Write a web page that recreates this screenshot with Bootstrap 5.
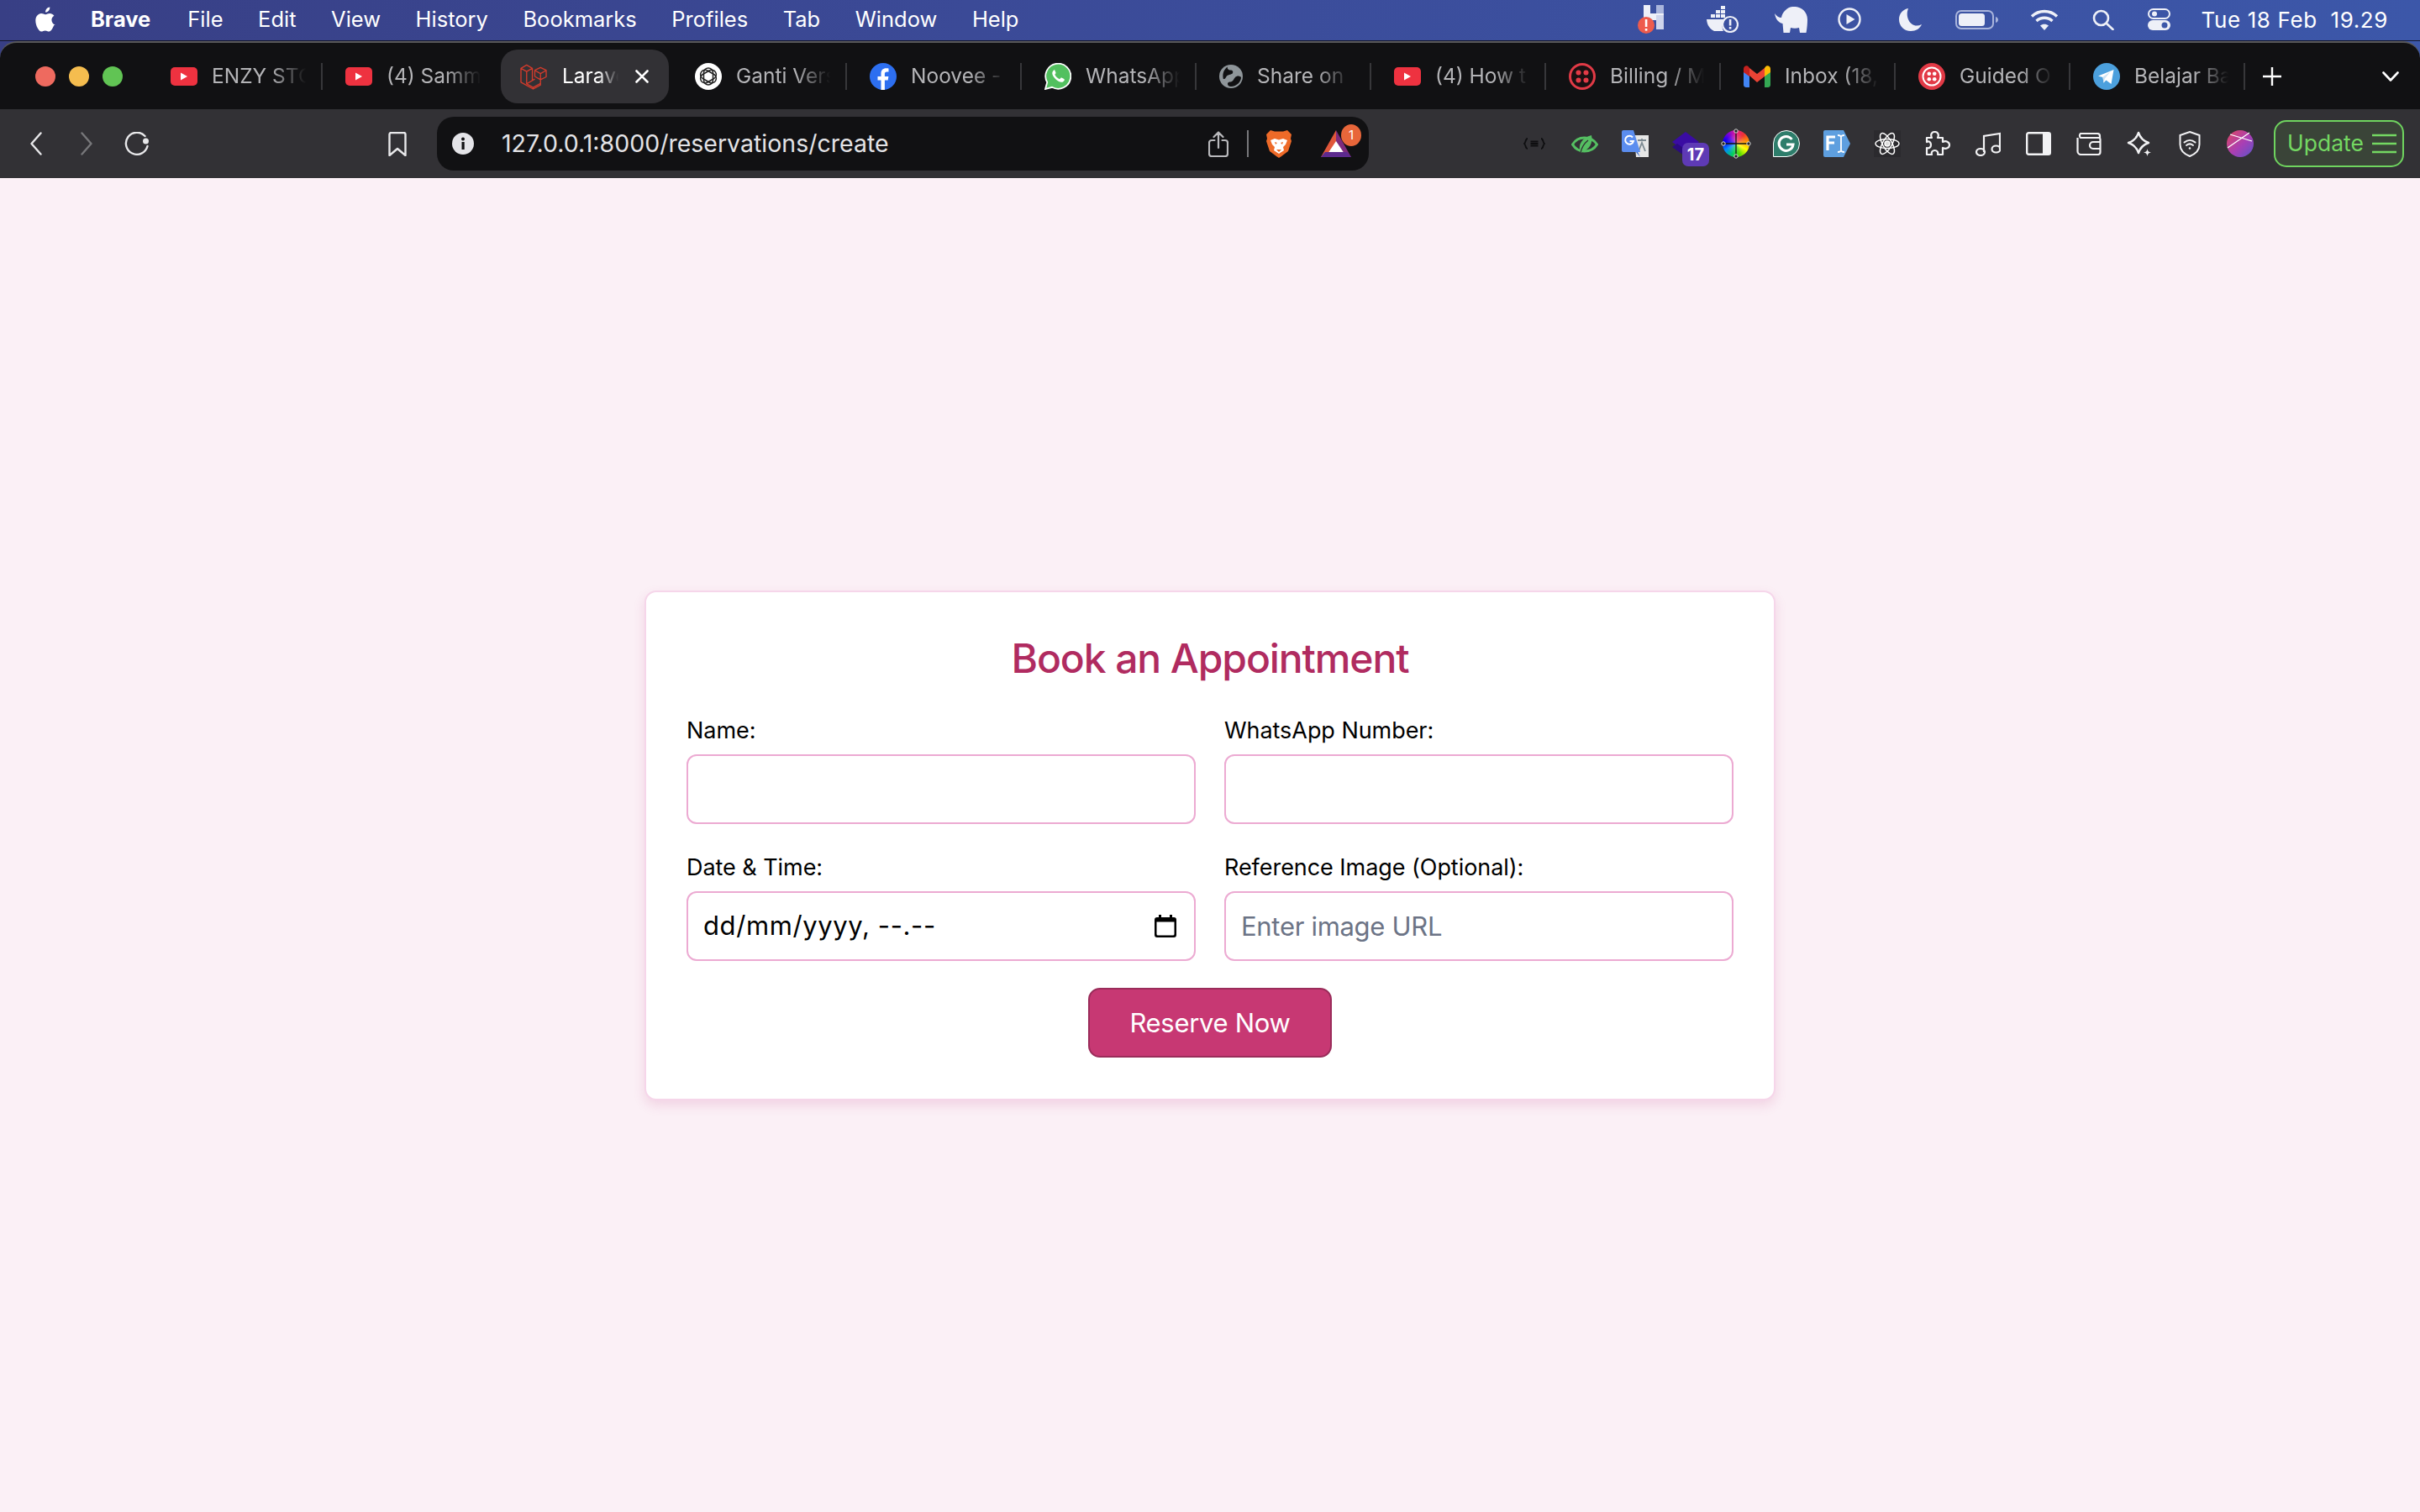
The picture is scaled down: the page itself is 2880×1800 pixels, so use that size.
<!DOCTYPE html>
<html lang="en">
<head>
  <meta charset="UTF-8" />
  <meta name="viewport" content="width=device-width, initial-scale=1.0"/>
  <title>Book an Appointment</title>
  <link href="https://cdn.jsdelivr.net/npm/bootstrap@5.3.0/dist/css/bootstrap.min.css" rel="stylesheet">
  <style>
    html, body { height: 100%; }
    body { background: #fbf0f6; font-family: Inter, "Liberation Sans", sans-serif; overflow: hidden; }
    svg { display: block; flex: none; }

    /* mac menu bar */
    .mac-top { background: linear-gradient(90deg, #383f85 0%, #3b4a97 40%, #3c57a9 100%); flex: none; }
    .menu-strip { height: 49px; padding-left: 42px; padding-bottom: 2px; color: #fff; font-size: 25.5px; border-bottom: 1px solid #15172a; }
    .menu-strip .apple-ico { margin-right: 41px; margin-top: -1px; }
    .menu-item { margin-right: 41.5px; white-space: nowrap; }
    .menu-item-bold { font-weight: 700; margin-right: 44px; }
    .menu-icons { margin-left: auto; padding-right: 38px; }
    .mi-docker { margin-left: 50px; }
    .mi-eleph { margin-left: 43px; }
    .mi-play { margin-left: 36px; }
    .mi-moon { margin-left: 45px; }
    .mi-batt { margin-left: 40px; }
    .mi-wifi { margin-left: 38px; }
    .mi-search { margin-left: 40px; }
    .mi-ctrl { margin-left: 40px; }
    .menu-date { margin-left: 37px; white-space: pre; font-size: 26px; letter-spacing: .6px; }

    /* browser chrome */
    .tab-strip { height: 81px; background: #111113; border-top: 2px solid #59595b; border-radius: 20px 20px 0 0; padding-left: 42px; }
    .light-dot { width: 24px; height: 24px; border-radius: 50%; margin-right: 16px; }
    .dot-red { background: #ee6a5f; }
    .dot-yellow { background: #f5bd4f; }
    .dot-green { background: #61c454; }
    .tab-row { margin-left: 14px; }
    .tab-cell { width: 208px; height: 32px; padding-left: 27px; gap: 17px; border-right: 2px solid #37373a; color: #b4b4b7; font-size: 24.5px; }
    .tab-cell.no-sep { border-right: 0; }
    .tab-now { width: 200px; height: 64px; margin: 0 4px; padding-left: 23px; gap: 18px; background: #323135; border-radius: 20px; border-right: 0; color: #fff; }
    .tab-name { width: 122px; overflow: hidden; white-space: nowrap; -webkit-mask-image: linear-gradient(90deg, #000 58%, transparent 92%); mask-image: linear-gradient(90deg, #000 58%, transparent 92%); }
    .tab-now .tab-name { width: 86px; -webkit-mask-image: linear-gradient(90deg, #000 50%, transparent 78%); mask-image: linear-gradient(90deg, #000 50%, transparent 78%); }
    .tab-x { margin-left: -17px; }
    .tab-plus { margin-left: 20px; }
    .tab-more { margin-left: auto; margin-right: 25px; }

    .tool-strip { height: 82px; background: #323135; padding-left: 13px; padding-right: 19px; }
    .tool-slot { width: 60px; }
    .tool-mark { margin-left: 269px; margin-right: 36px; }
    .addr-box { width: 1109px; height: 64px; background: #111113; border-radius: 20px; padding: 0 21px 0 18px; color: #e3e3e6; font-size: 28.5px; }
    .addr-url { margin-left: 33px; white-space: nowrap; }
    .addr-share { margin-left: auto; }
    .addr-line { width: 2px; height: 32px; background: #77777a; margin-left: 22px; margin-right: 20px; }
    .addr-bat { margin-left: 34px; }
    .bat-count { position: absolute; top: -7px; right: -12px; width: 24px; height: 26px; border-radius: 50%; background: #e8663a; color: #fff; font-size: 15px; line-height: 26px; text-align: center; }
    .ext-slot { width: 60px; height: 60px; }
    .ext-wrap { margin-left: auto; }
    .ext-count { position: absolute; left: 26px; bottom: 3px; width: 32px; height: 28px; border-radius: 7px; background: #5e3ab5; color: #fff; font-size: 20px; font-weight: 700; line-height: 28px; text-align: center; }
    .ext-wheel { width: 32px; height: 32px; border-radius: 50%; background: radial-gradient(circle, rgba(255,255,255,.35) 0, rgba(255,255,255,0) 55%), conic-gradient(#e8208c, #e33, #f90, #ff0, #5d0, #0c6, #08f, #00e, #70d, #e8208c); }
    .wheel-cross { position: absolute; left: 12px; top: 12px; }
    .update-pill { width: 155px; height: 56px; margin-left: 10px; padding-left: 14px; gap: 10px; background: #3a4438; border: 2px solid #6fd45f; border-radius: 15px; color: #74d862; font-size: 26.5px; }

    /* page */
    .form-shell { width: 1346px; border: 2px solid #f6d6ea; border-radius: 14px; box-shadow: 0 6px 14px rgba(190, 60, 130, .16); }
    .form-shell .card-body { padding: 49px 48px; }
    .form-title { font-size: 48px; line-height: 64px; font-weight: 500; color: #b02b60; letter-spacing: -1.1px; margin-top: -2px; margin-bottom: 34px; }
    .form-grid { --bs-gutter-x: 34px; --bs-gutter-y: 32px; }
    .form-grid .form-label { font-size: 27px; line-height: 40px; color: #000; margin-bottom: 8px; letter-spacing: -.05px; display: block; }
    .form-grid .form-control { height: 83px; padding: 0 18px; font-size: 31px; color: #000; border: 2px solid #ecaad2; border-radius: 12px; letter-spacing: -.3px; }
    .form-grid .form-control::placeholder { color: #6c7486; opacity: 1; }
    .date-mask { letter-spacing: .6px; }
    .date-ico { margin-right: 3px; }
    .reserve-btn { width: 290px; height: 83px; margin-top: 32px; background: #c73873; border: 2px solid #9a2c5a; border-radius: 14px; color: #fff; font-size: 31px; letter-spacing: -.3px; padding: 2px 0 0; }
    .reserve-btn:hover { background: #b8306a; color: #fff; border-color: #9a2c5a; }
  </style>
</head>

<body class="d-flex flex-column">
  <svg width="0" height="0" class="position-absolute">
    <symbol id="yt" viewBox="0 0 32 22"><rect width="32" height="22" rx="5" fill="#ee3240"/><path d="M12 6.500v9l8-4.500z" fill="#fff"/></symbol>
  </svg>

  <header class="mac-top">
    <div class="menu-strip d-flex align-items-center">
      <svg class="apple-ico" width="25" height="30" viewBox="0 0 16 20" fill="#fff"><path d="M11.200.3c.1 1-.3 2-.9 2.800-.6.700-1.600 1.300-2.600 1.200-.1-1 .4-2 .9-2.700C9.200.8 10.300.3 11.200.3zm3.300 14.400c-.4 1-.6 1.400-1.100 2.300-.7 1.200-1.700 2.700-3 2.700-1.100 0-1.400-.7-2.900-.7s-1.900.7-3 .7c-1.300 0-2.200-1.300-2.900-2.500C-.4 13.500-.6 9.700.7 7.700c.9-1.400 2.400-2.300 3.700-2.300 1.400 0 2.300.8 3.400.8 1.100 0 1.800-.8 3.400-.8 1.200 0 2.500.6 3.400 1.800-3 1.700-2.500 6 .9 7.300z"/></svg>
      <span class="menu-item-bold">Brave</span>
      <span class="menu-item">File</span>
      <span class="menu-item">Edit</span>
      <span class="menu-item">View</span>
      <span class="menu-item">History</span>
      <span class="menu-item">Bookmarks</span>
      <span class="menu-item">Profiles</span>
      <span class="menu-item">Tab</span>
      <span class="menu-item">Window</span>
      <span class="menu-item">Help</span>

      <div class="menu-icons d-flex align-items-center">
        <svg width="32" height="34" viewBox="0 0 32 34"><rect x="7" width="8" height="28" fill="#eef0f8"/><rect x="22" width="9" height="29" fill="#aab5dc"/><rect x="7" y="10" width="24" height="8" fill="#eef0f8"/><rect x="22" y="12" width="9" height="17" fill="#cfd5ec"/><circle cx="10" cy="24" r="10" fill="#ee5b4c"/><rect x="8.800" y="17" width="2.600" height="9" fill="#fff"/><rect x="8.800" y="28" width="2.600" height="2.600" fill="#fff"/></svg>
        <svg class="mi-docker" width="38" height="32" viewBox="0 0 38 32" fill="#eef0f8"><rect x="17" y="0" width="5" height="4"/><rect x="11" y="5" width="5" height="4"/><rect x="17" y="5" width="5" height="4"/><rect x="5" y="10" width="5" height="4"/><rect x="11" y="10" width="5" height="4"/><rect x="17" y="10" width="5" height="4"/><path d="M0 16h21v3c-3 2-3 7-1 11H9C4 28 .5 23 0 16z"/><circle cx="28" cy="22" r="9" fill="none" stroke="#eef0f8" stroke-width="2.200"/><rect x="26.800" y="16" width="2.600" height="7.500"/><rect x="26.800" y="25" width="2.600" height="2.600"/></svg>
        <svg class="mi-eleph" width="39" height="31" viewBox="0 0 39 31" fill="#eef0f8"><path d="M0 8c2 3 5 5 8 5 1-6 6-12 13-13 9-1 18 5 18 15 0 5-.5 11-1.500 16H30l-1-6c-3 1-7 1-10 0l-1 6h-7.500l-1-11C4 19 1 14 0 8z"/></svg>
        <svg class="mi-play" width="28" height="28" viewBox="0 0 28 28"><circle cx="14" cy="14" r="12.500" fill="none" stroke="#eef0f8" stroke-width="2.400"/><path d="M10.500 8v12l10-6z" fill="#eef0f8"/></svg>
        <svg class="mi-moon" width="27" height="27" viewBox="0 0 27 27"><path d="M11 0C5 1 0 6 0 13c0 8 6 14 14 14 6 0 11-3 13-8-2 1-4 1.500-6 1.500C13 20.500 7 10 11 0z" fill="#eef0f8"/></svg>
        <svg class="mi-batt" width="51" height="23" viewBox="0 0 51 23"><rect x="1" y="1" width="44" height="21" rx="6" fill="none" stroke="#aab5dc" stroke-width="2"/><rect x="4" y="4" width="31" height="15" rx="3.500" fill="#eef0f8"/><path d="M48 8c2 .5 3 2 3 3.500S50 14.500 48 15z" fill="#aab5dc"/></svg>
        <svg class="mi-wifi" width="34" height="25" viewBox="0 0 34 25" fill="none" stroke="#eef0f8" stroke-width="3.400"><path d="M2 8.500c8.500-8 21.500-8 30 0"/><path d="M7.500 14c5.500-5 13.500-5 19 0"/><path d="M17 25l-5-5.500c3-2.500 7-2.500 10 0z" fill="#eef0f8" stroke="none"/></svg>
        <svg class="mi-search" width="26" height="25" viewBox="0 0 26 25" fill="none" stroke="#eef0f8" stroke-width="2.600"><circle cx="10.500" cy="10.500" r="8.500"/><path d="M17 17l7.500 7" stroke-linecap="round"/></svg>
        <svg class="mi-ctrl" width="27" height="26" viewBox="0 0 27 26"><rect x="1" y="1" width="25" height="11" rx="5.500" fill="none" stroke="#eef0f8" stroke-width="2"/><circle cx="8" cy="6.500" r="3" fill="#eef0f8"/><rect y="14" width="27" height="12" rx="6" fill="#eef0f8"/><circle cx="20" cy="20" r="3.500" fill="#3c57a9"/></svg>
        <span class="menu-date">Tue 18 Feb  19.29</span>
      </div>
    </div>

    <div class="tab-strip d-flex align-items-center">
      <span class="light-dot dot-red"></span>
      <span class="light-dot dot-yellow"></span>
      <span class="light-dot dot-green"></span>

      <div class="tab-row d-flex align-items-center">
        <div class="tab-cell d-flex align-items-center"><svg width="32" height="22"><use href="#yt"/></svg><span class="tab-name">ENZY STO</span></div>
        <div class="tab-cell no-sep d-flex align-items-center"><svg width="32" height="22"><use href="#yt"/></svg><span class="tab-name">(4) Samm</span></div>
        <div class="tab-cell tab-now d-flex align-items-center">
          <svg width="32" height="32" viewBox="0 0 33 32" fill="none" stroke="#d23b2c" stroke-width="1.400" stroke-linejoin="round"><path d="M1 6l7-4 7 4-7 4zM1 6v17l15 8.500 9-5v-6.500M8 10v15l8 4.500M15 6v15l3-1.700M16 31.500v-2M16 29.500l9-5M18 8.500l7-3.500 7 3.500-7 4zM18 8.500v7.500l7 4 7-3.500V8.500M25 12.500v7.500M8 25l7-4"/></svg>
          <span class="tab-name">Laravel</span>
          <svg class="tab-x" width="16" height="16" viewBox="0 0 16 16" stroke="#fff" stroke-width="2.600" stroke-linecap="round"><path d="M1.500 1.500l13 13M14.500 1.500l-13 13"/></svg>
        </div>
        <div class="tab-cell d-flex align-items-center">
          <svg width="32" height="32" viewBox="0 0 32 32"><circle cx="16" cy="16" r="16" fill="#fff"/><g fill="none" stroke="#222" stroke-width="1.500"><rect x="10.500" y="6" width="11" height="20" rx="5.500"/><rect x="10.500" y="6" width="11" height="20" rx="5.500" transform="rotate(60 16 16)"/><rect x="10.500" y="6" width="11" height="20" rx="5.500" transform="rotate(120 16 16)"/></g></svg>
          <span class="tab-name">Ganti Vers</span></div>
        <div class="tab-cell d-flex align-items-center">
          <svg width="32" height="32" viewBox="0 0 32 32"><circle cx="16" cy="16" r="16" fill="#2d6ff0"/><path d="M13.500 32V20.500H9.500V16h4v-3.500c0-4 2.400-6.200 6-6.200 1.700 0 3 .2 3 .2v4h-2c-2 0-2.600 1.200-2.600 2.500V16h4.500l-.7 4.500h-3.800V32z" fill="#fff"/></svg>
          <span class="tab-name">Noovee -</span></div>
        <div class="tab-cell d-flex align-items-center">
          <svg width="32" height="32" viewBox="0 0 32 32"><path d="M1 31l2.200-8A15 15 0 1 1 9 28.800z" fill="#52c05f" stroke="#fff" stroke-width="1.800"/><path d="M11.500 8.500c-1 .4-2.500 2-2.200 4.300.4 3 5 9.200 10.500 10 2 .2 3.500-1 4-2.300.2-.6 0-1.200-.5-1.500l-2.800-1.400c-.5-.2-1-.1-1.300.3l-1.100 1.300c-2.600-1-4.700-3-5.800-5.400l1-1.200c.3-.4.300-.9.100-1.300l-1.200-2.800c-.2-.4-.4-.5-.7-.4z" fill="#fff"/></svg>
          <span class="tab-name">WhatsApp</span></div>
        <div class="tab-cell d-flex align-items-center">
          <svg width="28" height="28" viewBox="0 0 28 28"><circle cx="14" cy="14" r="14" fill="#8f969a"/><path d="M10 2.500c-1 2 1 4 3.500 4 2 0 3.500 1.500 2.500 3.500-1 2-5 1.500-7 3.500-1.500 1.500-1 3.500-4 3.500 0 0-3-9 5-14.500zM26 15c-2-2-5-2-7 0s-2 4-4 5-5 0-5 3c0 1.500 1 3 4 3 7 0 12-6 12-11z" fill="#111113"/></svg>
          <span class="tab-name">Share on</span></div>
        <div class="tab-cell d-flex align-items-center"><svg width="32" height="22"><use href="#yt"/></svg><span class="tab-name">(4) How t</span></div>
        <div class="tab-cell d-flex align-items-center">
          <svg width="32" height="32" viewBox="0 0 32 32"><circle cx="16" cy="16" r="14.500" fill="#1a1012" stroke="#e23a46" stroke-width="3"/><g fill="#e23a46"><circle cx="11.500" cy="11.500" r="3"/><circle cx="20.500" cy="11.500" r="3"/><circle cx="11.500" cy="20.500" r="3"/><circle cx="20.500" cy="20.500" r="3"/></g></svg>
          <span class="tab-name">Billing / M</span></div>
        <div class="tab-cell d-flex align-items-center">
          <svg width="32" height="26" viewBox="0 0 32 26"><path d="M0 4v19c0 1.600 1.200 3 3 3h4V12z" fill="#4285f4"/><path d="M32 4v19c0 1.600-1.200 3-3 3h-4V12z" fill="#34a853"/><path d="M25 3v10l7-5V4c0-3.400-4-5-6-2.500z" fill="#fbbc04"/><path d="M7 12V3l9 7 9-7v10l-9 7z" fill="#ea4335"/><path d="M0 4v4l7 5V3L6 1.500C4-1 0 .6 0 4z" fill="#c5221f"/></svg>
          <span class="tab-name">Inbox (18,</span></div>
        <div class="tab-cell d-flex align-items-center">
          <svg width="32" height="32" viewBox="0 0 32 32"><circle cx="16" cy="16" r="16" fill="#e23a46"/><circle cx="16" cy="16" r="10.500" fill="none" stroke="#fff" stroke-width="2"/><g fill="#fff"><circle cx="12.800" cy="12.800" r="2.300"/><circle cx="19.200" cy="12.800" r="2.300"/><circle cx="12.800" cy="19.200" r="2.300"/><circle cx="19.200" cy="19.200" r="2.300"/></g></svg>
          <span class="tab-name">Guided O</span></div>
        <div class="tab-cell d-flex align-items-center">
          <svg width="32" height="32" viewBox="0 0 32 32"><circle cx="16" cy="16" r="16" fill="#4ca0dd"/><path d="M6 15.500L24.500 8l-3 17-6-4.500-3 3-1-6.500z" fill="#fff"/><path d="M11.500 16.500l9-6-6.500 8-1.500 5.500z" fill="#cfe3f3"/></svg>
          <span class="tab-name">Belajar Ba</span></div>
      </div>
      <svg class="tab-plus" width="24" height="24" viewBox="0 0 24 24" stroke="#fff" stroke-width="2.400"><path d="M12 1v22M1 12h22"/></svg>
      <svg class="tab-more" width="20" height="12" viewBox="0 0 20 12" fill="none" stroke="#fff" stroke-width="2.600" stroke-linecap="round" stroke-linejoin="round"><path d="M1.500 1.500L10 10.500l8.500-9"/></svg>
    </div>

    <div class="tool-strip d-flex align-items-center">
      <div class="tool-slot d-flex justify-content-center"><svg width="14" height="28" viewBox="0 0 14 28" fill="none" stroke="#e8e8ea" stroke-width="2.400" stroke-linecap="round" stroke-linejoin="round"><path d="M12.500 1.500L1.500 14l11 12.500"/></svg></div>
      <div class="tool-slot d-flex justify-content-center"><svg width="14" height="28" viewBox="0 0 14 28" fill="none" stroke="#77777a" stroke-width="2.400" stroke-linecap="round" stroke-linejoin="round"><path d="M1.500 1.500L12.500 14l-11 12.500"/></svg></div>
      <div class="tool-slot d-flex justify-content-center"><svg width="30" height="28" viewBox="0 0 30 28" fill="none" stroke="#e8e8ea" stroke-width="2.400" stroke-linecap="round"><path d="M24.500 5A13 13 0 1 0 27.500 17"/><circle cx="25.500" cy="11" r="3.500" fill="#e8e8ea" stroke="none"/></svg></div>
      <svg class="tool-mark" width="22" height="29" viewBox="0 0 22 29" fill="none" stroke="#e8e8ea" stroke-width="2.400" stroke-linejoin="round"><path d="M1.500 3a2 2 0 0 1 2-2h15a2 2 0 0 1 2 2v25L11 20 1.500 28z"/></svg>

      <div class="addr-box d-flex align-items-center">
        <svg width="26" height="26" viewBox="0 0 26 26"><circle cx="13" cy="13" r="13" fill="#e4e4e8"/><rect x="11.500" y="11" width="3.200" height="9" fill="#111113"/><circle cx="13" cy="7.500" r="2" fill="#111113"/></svg>
        <span class="addr-url">127.0.0.1:8000/reservations/create</span>
        <svg class="addr-share" width="24" height="31" viewBox="0 0 24 31" fill="none" stroke="#b9b9bc" stroke-width="2.200" stroke-linecap="round" stroke-linejoin="round"><path d="M12 20V2M6.500 7L12 1.500 17.500 7M7.500 11H4a3 3 0 0 0-3 3v13a3 3 0 0 0 3 3h16a3 3 0 0 0 3-3V14a3 3 0 0 0-3-3h-3.500"/></svg>
        <span class="addr-line"></span>
        <svg width="32" height="34" viewBox="0 0 32 34"><path d="M6 1l5 1.500h10L26 1l5 5-1 5 1 3-4 12-8 6-3 2-3-2-8-6-4-12 1-3-1-5z" fill="#ee6a28"/><path d="M6 13l5-2 5 1.500 5-1.500 5 2-2 5-3 3 1 4-6 4-6-4 1-4-3-3z" fill="#fff"/><path d="M11 15l3 1-2 2zM21 15l-3 1 2 2zM13 24h6l-3 3z" fill="#ee6a28"/></svg>
        <div class="addr-bat position-relative">
          <svg width="36" height="32" viewBox="0 0 36 32"><path d="M18 0L0 32h10l8-18z" fill="#e0563a"/><path d="M18 0l18 32H26l-8-18z" fill="#7e2b7c"/><path d="M18 13L8 28h20z" fill="#fff"/><path d="M0 32l5-6h26l5 6z" fill="#5d2a8e"/></svg>
          <span class="bat-count">1</span>
        </div>
      </div>

      <div class="ext-wrap d-flex align-items-center">
        <div class="ext-slot d-flex align-items-center justify-content-center"><svg width="26" height="14" viewBox="0 0 26 14" fill="none" stroke="#0e0e10" stroke-width="1.800"><path d="M5 1C2 1 3 6 1 7c2 1 1 6 4 6M21 1c3 0 2 5 4 6-2 1-1 6-4 6M8.500 4.500h9M8.500 7h9M8.500 9.500h9"/></svg></div>
        <div class="ext-slot d-flex align-items-center justify-content-center"><svg width="32" height="23" viewBox="0 0 32 23"><path d="M1.500 12c3-5 8-8 14-8s12 3 15 8c-3 5-8 8-15 8S4.500 17 1.500 12z" fill="none" stroke="#55bf62" stroke-width="3"/><path d="M11 22C7 12 13 4 24 1c2 9-2 17-13 21z" fill="#55bf62"/><path d="M11 22c1-6 4-11 9-15" fill="none" stroke="#323135" stroke-width="1.400"/></svg></div>
        <div class="ext-slot d-flex align-items-center justify-content-center"><svg width="32" height="32" viewBox="0 0 32 32"><path d="M15 6h17v26H17z" fill="#e6e6e6"/><path d="M19 12h10M24 10v3M20 25l4-10 4 10" fill="none" stroke="#7d8a92" stroke-width="1.800"/><path d="M2 0h12l8 26H2a2 2 0 0 1-2-2V2a2 2 0 0 1 2-2z" fill="#5b8def"/><path d="M17 26l5 6-3-6z" fill="#3565c8"/><path d="M13 8.500a5 5 0 1 0 1 4.500H9.500" fill="none" stroke="#fff" stroke-width="2"/></svg></div>
        <div class="ext-slot position-relative d-flex align-items-center justify-content-center"><svg width="32" height="28" viewBox="0 0 32 28"><path d="M16 0l16 12-16 12L0 12z" fill="#3a0ca3"/><path d="M0 18l6-4 14 10-6 4z" fill="#2b0a80"/></svg><span class="ext-count">17</span></div>
        <div class="ext-slot position-relative d-flex align-items-center justify-content-center">
          <div class="ext-wheel"></div>
          <svg class="wheel-cross" width="36" height="36" viewBox="0 0 36 36" stroke="#111" stroke-width="1.300"><path d="M18 1v34M1 18h34"/><g fill="#222" stroke="#ddd" stroke-width="1"><circle cx="18" cy="3" r="2.200"/><circle cx="18" cy="33" r="2.200"/><circle cx="3" cy="18" r="2.200"/><circle cx="33" cy="18" r="2.200"/></g></svg>
        </div>
        <div class="ext-slot d-flex align-items-center justify-content-center"><svg width="32" height="32" viewBox="0 0 32 32"><path d="M16 .5A15.500 15.500 0 0 1 31.500 16 15.500 15.500 0 0 1 16 31.500H.5V16A15.500 15.500 0 0 1 16 .5z" fill="#2e7d6b" stroke="#fff" stroke-width="1"/><path d="M22.500 11A8.500 8.500 0 1 0 24 17h-8" fill="none" stroke="#fff" stroke-width="3"/></svg></div>
        <div class="ext-slot d-flex align-items-center justify-content-center"><svg width="32" height="32" viewBox="0 0 32 32"><path d="M2 0h22l8 16-8 16H2a2 2 0 0 1-2-2V2a2 2 0 0 1 2-2z" fill="#5e9fdf"/><path d="M5 24V8h9M5 15h8" fill="none" stroke="#fff" stroke-width="3.200"/><path d="M17 6c2 0 3 0 4 1.500C22 6 23 6 25 6M21 7v18M17 26c2 0 3 0 4-1.500 1 1.500 2 1.500 4 1.500" fill="none" stroke="#fff" stroke-width="1.800"/></svg></div>
        <div class="ext-slot d-flex align-items-center justify-content-center"><svg width="32" height="32" viewBox="0 0 32 32"><rect width="32" height="32" fill="#2b2a2e"/><g fill="none" stroke="#fff" stroke-width="1.500"><ellipse cx="16" cy="16" rx="14" ry="5.500"/><ellipse cx="16" cy="16" rx="14" ry="5.500" transform="rotate(60 16 16)"/><ellipse cx="16" cy="16" rx="14" ry="5.500" transform="rotate(120 16 16)"/><circle cx="16" cy="16" r="3" fill="#ddd"/></g></svg></div>
        <div class="ext-slot d-flex align-items-center justify-content-center"><svg width="30" height="30" viewBox="0 0 30 30" fill="none" stroke="#f2f2f4" stroke-width="2.200" stroke-linejoin="round"><path d="M2 8h6c-2-4 0-7 3.500-7S17 4 15 8h6v5c4-2 8 0 8 3.500S25 22 21 20v8h-6c1-3-1-5-3.500-5S7 25 8 28H2v-8c3 1 5-1 5-3.500S5 11 2 13z"/></svg></div>
        <div class="ext-slot d-flex align-items-center justify-content-center"><svg width="30" height="30" viewBox="0 0 30 30" fill="none" stroke="#f2f2f4" stroke-width="2.200"><path d="M10 25V6l19-3v19"/><ellipse cx="6" cy="25" rx="5" ry="4"/><ellipse cx="24.500" cy="21.500" rx="5" ry="4"/></svg></div>
        <div class="ext-slot d-flex align-items-center justify-content-center"><svg width="30" height="28" viewBox="0 0 30 28"><rect x="1.200" y="1.200" width="27.600" height="25.600" rx="2" fill="none" stroke="#f2f2f4" stroke-width="2.400"/><rect x="20" y="1" width="9" height="26" fill="#f2f2f4"/></svg></div>
        <div class="ext-slot d-flex align-items-center justify-content-center"><svg width="30" height="27" viewBox="0 0 30 27" fill="none" stroke="#f2f2f4" stroke-width="2.200"><path d="M1.500 6V22a4 4 0 0 0 4 4h20a3 3 0 0 0 3-3V8a2 2 0 0 0-2-2H5a3.500 3.500 0 0 1 0-5h20a3 3 0 0 1 3 3v2"/><path d="M28.500 11H20a3.500 3.500 0 0 0 0 8h8.500"/></svg></div>
        <div class="ext-slot d-flex align-items-center justify-content-center"><svg width="30" height="31" viewBox="0 0 30 31"><path d="M14 2Q17 11 26 14 17 17 14 26 11 17 2 14 11 11 14 2z" fill="none" stroke="#f2f2f4" stroke-width="2.400" stroke-linejoin="round"/><path d="M24.500 21c.4 3 1.600 4.200 4.500 4.500-2.900.4-4.100 1.600-4.500 4.500-.4-2.900-1.600-4.100-4.500-4.500 2.900-.3 4.100-1.500 4.500-4.500z" fill="#f2f2f4"/></svg></div>
        <div class="ext-slot d-flex align-items-center justify-content-center"><svg width="26" height="31" viewBox="0 0 26 31" fill="none" stroke="#f2f2f4" stroke-width="2"><path d="M13 1l11.500 4v11c0 6-4 11-11.500 14C5.500 27 1.500 22 1.500 16V5z"/><path d="M6.500 13.500c4-3.500 9-3.500 13 0M9 17c2.500-2 5.500-2 8 0" stroke-linecap="round"/><circle cx="13" cy="20.500" r="1.300" fill="#f2f2f4" stroke="none"/></svg></div>
        <div class="ext-slot d-flex align-items-center justify-content-center"><svg width="32" height="32" viewBox="0 0 32 32"><defs><linearGradient id="avatarFill" x1="0" y1="0" x2="1" y2="1"><stop offset="0" stop-color="#e0485f"/><stop offset=".55" stop-color="#a83fb5"/><stop offset="1" stop-color="#5a55c9"/></linearGradient></defs><circle cx="16" cy="16" r="16" fill="url(#avatarFill)"/><path d="M4 5l26 8M1 21L27 3" stroke="#fff" stroke-width="1.300"/></svg></div>

        <div class="update-pill d-flex align-items-center">
          <span>Update</span>
          <svg width="29" height="24" viewBox="0 0 29 24" stroke="#74d862" stroke-width="2.400"><path d="M0 2h29M0 12h29M0 22h29"/></svg>
        </div>
      </div>
    </div>
  </header>

  <main class="flex-grow-1 d-flex align-items-center justify-content-center">
    <div class="card form-shell">
      <div class="card-body">
        <h2 class="form-title text-center">Book an Appointment</h2>
        <form>
          <div class="row row-cols-2 form-grid">
            <div class="col">
              <label class="form-label" for="nameInput">Name:</label>
              <input class="form-control" id="nameInput" type="text">
            </div>
            <div class="col">
              <label class="form-label" for="phoneInput">WhatsApp Number:</label>
              <input class="form-control" id="phoneInput" type="text">
            </div>
            <div class="col">
              <label class="form-label">Date &amp; Time:</label>
              <div class="form-control d-flex align-items-center justify-content-between">
                <span class="date-mask">dd/mm/yyyy, --.--</span>
                <svg class="date-ico" width="26" height="27" viewBox="0 0 26 27"><path d="M5 0h3v3h10V0h3v3h2a3 3 0 0 1 3 3v18a3 3 0 0 1-3 3H3a3 3 0 0 1-3-3V6a3 3 0 0 1 3-3h2zM2.500 8.500V23a1.500 1.500 0 0 0 1.500 1.500h18a1.500 1.500 0 0 0 1.500-1.500V8.500z" fill="#000"/></svg>
              </div>
            </div>
            <div class="col">
              <label class="form-label" for="imageInput">Reference Image (Optional):</label>
              <input class="form-control" id="imageInput" type="text" placeholder="Enter image URL">
            </div>
          </div>
          <div class="d-flex justify-content-center">
            <button type="button" class="btn reserve-btn">Reserve Now</button>
          </div>
        </form>
      </div>
    </div>
  </main>

  <script src="https://cdn.jsdelivr.net/npm/bootstrap@5.3.0/dist/js/bootstrap.bundle.min.js"></script>
</body>
</html>
